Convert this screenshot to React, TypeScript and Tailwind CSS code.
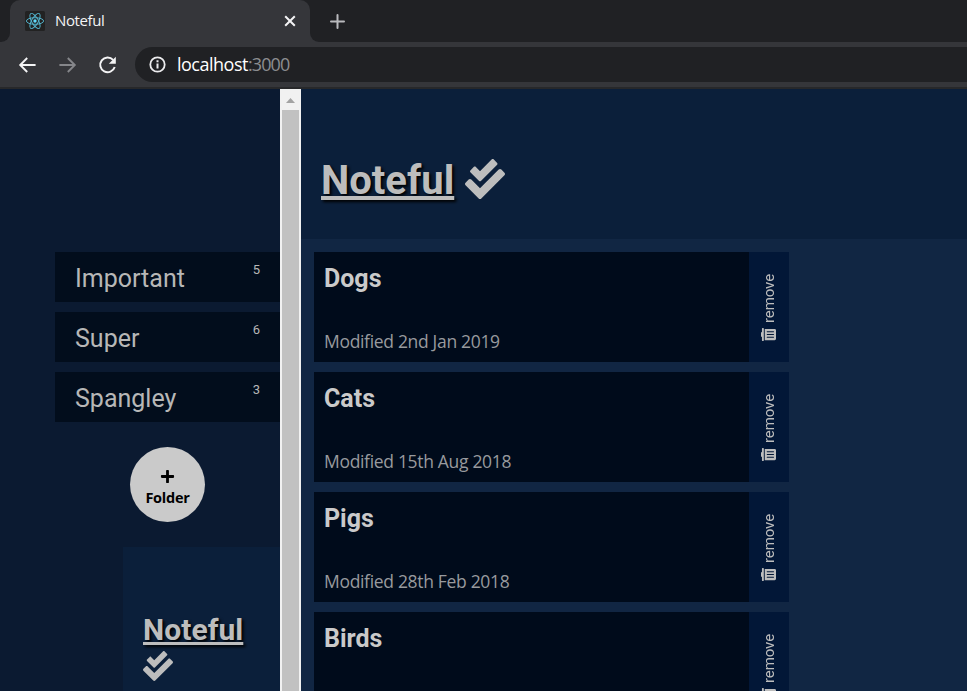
import React from "react";
import { FaCheckDouble, FaPlus, FaTrashAlt } from "react-icons/fa";

const folders = [
  { name: "Important", count: 5 },
  { name: "Super", count: 6 },
  { name: "Spangley", count: 3 },
];

const notes = [
  { name: "Dogs", modified: "2nd Jan 2019" },
  { name: "Cats", modified: "15th Aug 2018" },
  { name: "Pigs", modified: "28th Feb 2018" },
  { name: "Birds" },
];

function ReactLogo() {
  return (
    <svg width="20" height="20" viewBox="0 0 20 20" className="shrink-0">
      <rect width="20" height="20" rx="1.5" fill="#222222" />
      <g fill="none" stroke="#53b5cf" strokeWidth="0.95">
        <ellipse cx="10" cy="10" rx="8.6" ry="3.3" />
        <ellipse cx="10" cy="10" rx="8.6" ry="3.3" transform="rotate(60 10 10)" />
        <ellipse cx="10" cy="10" rx="8.6" ry="3.3" transform="rotate(120 10 10)" />
      </g>
      <circle cx="10" cy="10" r="1.7" fill="#61dafb" />
    </svg>
  );
}

function Browser() {
  return (
    <div className="h-[89px] shrink-0 bg-[#35363a] font-['Open_Sans','Noto_Sans',sans-serif]">
      <div className="flex h-[42px] bg-[#202124]">
        <div className="w-[10px] bg-[#35363a]">
          <div className="h-full rounded-br-[9px] bg-[#202124]" />
        </div>
        <div className="flex w-[300px] items-center rounded-t-[10px] bg-[#35363a] pl-[15px] pr-[13px]">
          <ReactLogo />
          <span className="-mt-[2px] ml-[10px] flex-1 text-[15px] leading-5 tracking-[-0.4px] text-[#f4f4f5]">Noteful</span>
          <svg width="14" height="14" viewBox="0 0 14 14" stroke="#f4f4f5" strokeWidth="2">
            <path d="M2.2 2.2l9.6 9.6M11.8 2.2l-9.6 9.6" />
          </svg>
        </div>
        <div className="flex flex-1 bg-[#35363a]">
          <div className="flex flex-1 items-center rounded-bl-[9px] bg-[#202124] pl-[20px]">
            <svg width="15" height="15" viewBox="0 0 15 15" stroke="#b9babd" strokeWidth="2" strokeLinecap="round">
              <path d="M1 7.5h13M7.5 1v13" />
            </svg>
          </div>
        </div>
      </div>
      <div className="flex h-[45px] items-center">
        <svg width="18" height="18" viewBox="0 0 18 18" fill="none" stroke="#f4f4f5" strokeWidth="1.9" className="ml-[18px]">
          <path d="M17.6 9H2.5M9.2 2L2.2 9l7 7" />
        </svg>
        <svg width="18" height="18" viewBox="0 0 18 18" fill="none" stroke="#85868a" strokeWidth="1.9" className="ml-[23px]">
          <path d="M.4 9h15.1M8.8 2l7 7-7 7" />
        </svg>
        <svg width="20" height="20" viewBox="0 0 20 20" className="ml-[21px]">
          <path d="M15.1 4.8A7.4 7.4 0 1 0 16.7 12" fill="none" stroke="#f4f4f5" strokeWidth="2" />
          <path d="M17.8 1.8v7h-7z" fill="#f4f4f5" />
        </svg>
        <div className="ml-[17px] flex h-[35px] flex-1 items-center rounded-l-full bg-[#202124] pl-[14px]">
          <svg width="17" height="17" viewBox="0 0 17 17" fill="none" stroke="#ececee" strokeWidth="2">
            <circle cx="8.5" cy="8.5" r="7.2" strokeWidth="1.8" />
            <path d="M8.5 7.5v5M8.5 4.3v2" />
          </svg>
          <span className="-mt-[2px] ml-[11px] text-[18px] leading-6 tracking-[-0.5px] text-white">
            localhost<span className="tracking-[-0.9px] text-[#8c8d90]">:3000</span>
          </span>
        </div>
      </div>
      <div className="h-[2px] bg-[#27282a]" />
    </div>
  );
}

function Sidebar() {
  return (
    <aside className="w-[280px] shrink-0 overflow-hidden bg-[#0b1a31] pt-[163px]">
      <ul className="ml-[55px] space-y-[10px]">
        {folders.map((folder) => (
          <li key={folder.name} className="flex h-[50px] items-start justify-between bg-[#020d1c] pl-5 pr-5 text-[#b7b7b7]">
            <span className="pt-px text-[25px] leading-[51px]">{folder.name}</span>
            <span className="mt-[8px] text-[13px] leading-5">{folder.count}</span>
          </li>
        ))}
      </ul>
      <button className="ml-[130px] mt-[25px] flex size-[75px] flex-col items-center rounded-full bg-[#cacaca] pt-[22px] font-['Open_Sans','Noto_Sans',sans-serif] text-black">
        <FaPlus className="size-[15px]" />
        <span className="mt-[4px] text-[14.5px] font-bold leading-5 tracking-[-0.25px]">Folder</span>
      </button>
      <div className="ml-[123px] mt-[25px] h-[200px] bg-[#0b1f3a] pl-5 pt-[64px] text-[#bdbdbd]">
        <h2 className="text-[30px] font-bold leading-[38px] tracking-[0.05px] underline decoration-[3px] underline-offset-[2px] [text-decoration-skip-ink:none] [text-shadow:2px_2px_3px_#000]">Noteful</h2>
        <FaCheckDouble className="mt-[2px] size-[30px]" />
      </div>
    </aside>
  );
}

function Scrollbar() {
  return (
    <div className="flex w-[21px] shrink-0 flex-col items-center bg-[#f1f1f1]">
      <div className="flex h-[21px] shrink-0 items-center">
        <svg width="9" height="5" viewBox="0 0 9 5" className="mt-[2px]" fill="#a3a3a3">
          <path d="M4.5 0L9 5H0z" />
        </svg>
      </div>
      <div className="w-[17px] flex-1 bg-[#c1c1c1]" />
    </div>
  );
}

export default function App() {
  return (
    <div className="flex h-[691px] w-[967px] flex-col overflow-hidden bg-[#112643] font-[Roboto,sans-serif]">
      <Browser />
      <div className="flex min-h-0 flex-1">
        <Sidebar />
        <Scrollbar />
        <main className="min-w-0 flex-1 overflow-hidden">
          <header className="flex h-[150px] items-start gap-[11px] bg-[#0b1f3a] pl-5 pt-[67px] text-[#bdbdbd]">
            <h1 className="text-[40px] font-bold leading-[50px] underline decoration-[4px] underline-offset-[2px] [text-decoration-skip-ink:none] [text-shadow:2px_2px_3px_#000]">Noteful</h1>
            <FaCheckDouble className="mt-[3px] size-10" />
          </header>
          <ul className="ml-[13px] mt-[13px] w-[475px] space-y-[10px]">
            {notes.map((note) => (
              <li key={note.name} className="flex h-[110px]">
                <div className="flex flex-1 flex-col justify-between bg-[#000b1b] px-[10px] pb-[9px] pt-[10px]">
                  <h3 className="pt-px text-[25px] font-bold leading-8 text-[#cacaca]">{note.name}</h3>
                  {note.modified && (
                    <p className="font-['Open_Sans','Noto_Sans',sans-serif] text-[17.5px] leading-6 tracking-[-0.32px] text-[#989a9e]">Modified {note.modified}</p>
                  )}
                </div>
                <button className="flex w-10 flex-col items-center bg-[#021737] pt-[22px] text-[#bdbdbd]">
                  <span className="rotate-180 text-[15px] leading-4 tracking-[-0.1px] [writing-mode:vertical-rl]">remove</span>
                  <FaTrashAlt className="mr-px mt-[4px] size-[15px] -rotate-90" />
                </button>
              </li>
            ))}
          </ul>
        </main>
      </div>
    </div>
  );
}
